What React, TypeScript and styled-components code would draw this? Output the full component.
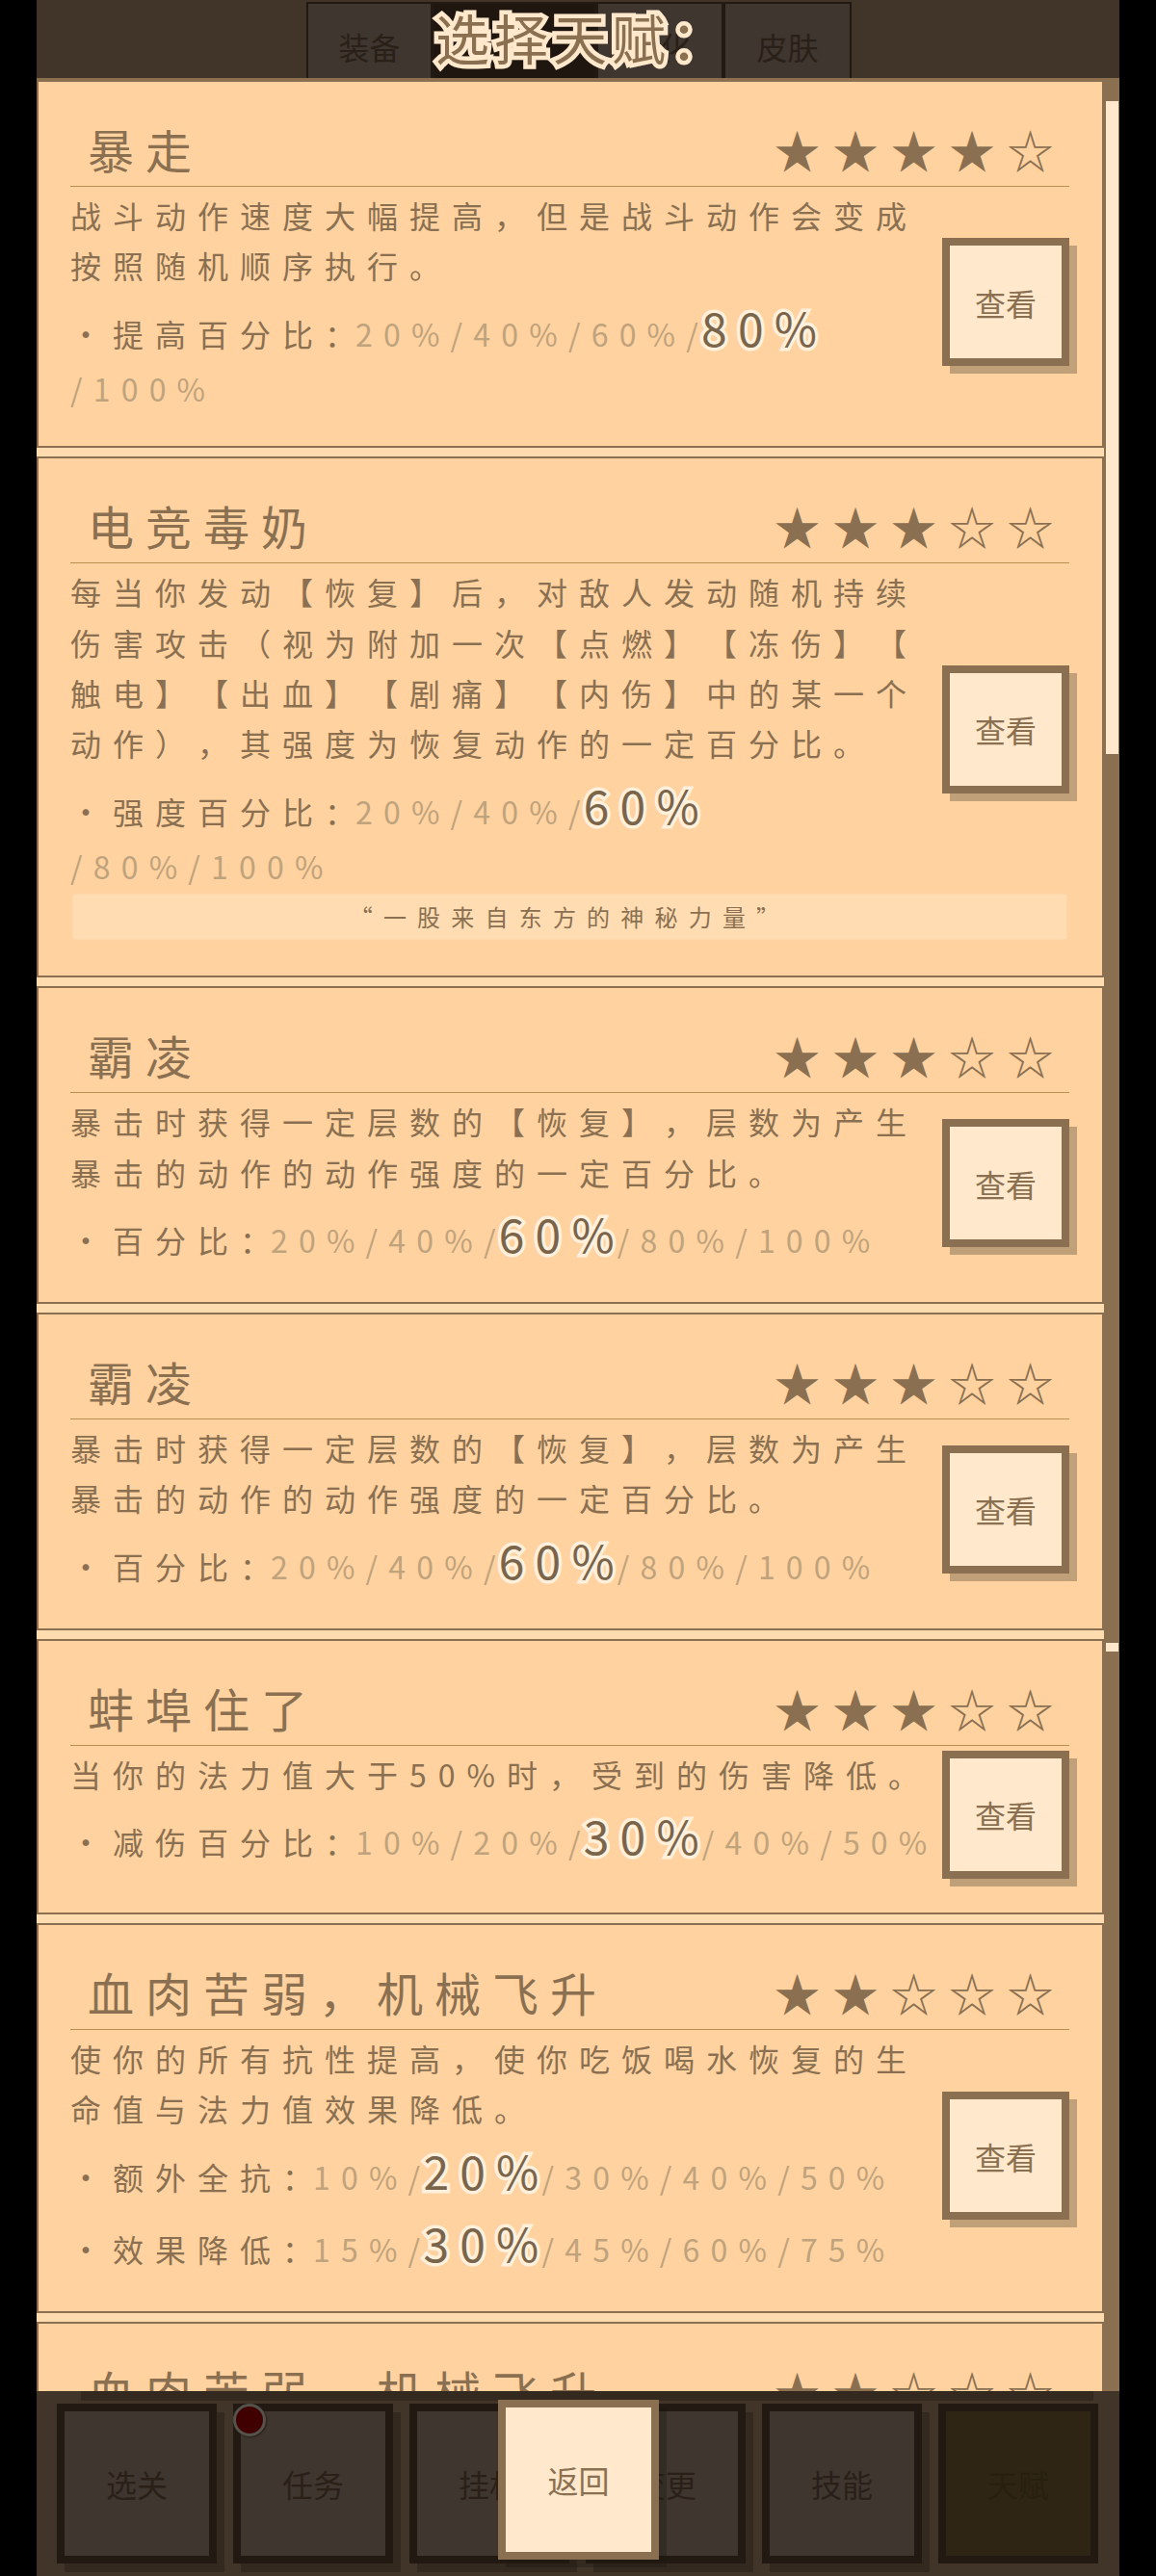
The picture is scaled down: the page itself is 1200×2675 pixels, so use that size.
import React from "react";
import styled, { createGlobalStyle } from "styled-components";

const Global = createGlobalStyle`
  html, body { margin: 0; padding: 0; background: #000; }
  body { font-family: "Noto Sans CJK SC", "Noto Sans", sans-serif; }
`;

const App = styled.div`
  width: 1124px;
  height: 2675px;
  margin-left: 38px;
  display: flex;
  flex-direction: column;
  position: relative;
  overflow: hidden;
  background: #403528;
`;

const Header = styled.header`
  flex: none;
  height: 81px;
  border-bottom: 2px solid #8a7050;
  background: #403528;
  display: flex;
  align-items: flex-end;
  padding-left: 280px;
  position: relative;
`;

const Tab = styled.div<{ $w: number; $active?: boolean }>`
  width: ${(p) => p.$w}px;
  height: 79px;
  box-sizing: border-box;
  border: 2px solid #221a12;
  border-bottom: 0;
  background: ${(p) => (p.$active ? "#1f170f" : "#3f3630")};
  color: #2a2018;
  font-size: 32px;
  line-height: 32px;
  padding-top: 28px;
  text-align: center;
`;

const Title = styled.h1`
  position: absolute;
  left: 414px;
  top: 2px;
  margin: 0;
  font-size: 56px;
  line-height: 72px;
  letter-spacing: 5px;
  font-weight: 400;
  white-space: nowrap;
  color: #8a7050;
  -webkit-text-stroke: 9px #ffe8cc;
  paint-order: stroke fill;
`;

const Main = styled.div`
  flex: 1;
  min-height: 0;
  display: flex;
  overflow: hidden;
`;

const List = styled.div`
  flex: 1;
  min-width: 0;
  display: flex;
  flex-direction: column;
  gap: 9px;
  background: #ffdcb0;
`;

const Card = styled.section`
  flex: none;
  border: 2px solid #8a7050;
  background: #ffd2a0;
  padding: 0 34px 28px 33px;
  position: relative;
`;

const CardHead = styled.div`
  height: 109px;
  padding: 33px 4px 0 18px;
  box-sizing: border-box;
  display: flex;
  justify-content: space-between;
  align-items: flex-start;
  border-bottom: 1.5px solid #b8904f;
`;

const CardName = styled.h2`
  margin: 0;
  font-size: 48px;
  line-height: 72px;
  letter-spacing: 12px;
  font-weight: 400;
  color: #8a7050;
`;

const Stars = styled.div`
  font-size: 48px;
  line-height: 72px;
  letter-spacing: 12.5px;
  color: #8a7050;
`;

const CardBody = styled.div`
  display: flex;
  align-items: center;
`;

const TextCol = styled.div`
  width: 905px;
  flex: none;
  align-self: flex-start;
  padding: 3px 0 6px;
`;

const Desc = styled.p`
  margin: 0;
  font-size: 32px;
  line-height: 52.4px;
  letter-spacing: 12px;
  line-break: anywhere;
  text-spacing-trim: space-all;
  color: #8a7050;
`;

const Stat = styled.p`
  margin: 13px 0 0;
  font-size: 32px;
  line-height: 52.4px;
  letter-spacing: 12px;
  color: #8a7050;
`;

const Colon = styled.span`
  letter-spacing: 0;
`;

const Dim = styled.span`
  color: #bfa37c;
  letter-spacing: 11.2px;
`;

const Big = styled.span`
  display: inline-block;
  font-size: 48px;
  line-height: 48px;
  letter-spacing: 11.2px;
  padding-bottom: 14px;
  margin: 0 -8px;
  color: #7a644a;
  -webkit-text-stroke: 7px #fff0dc;
  paint-order: stroke fill;
`;

const ViewButton = styled.button`
  flex: none;
  width: 132px;
  height: 133px;
  margin: 5px 0 7px;
  box-sizing: border-box;
  border: 8px solid #8a7050;
  background: #ffe8cc;
  box-shadow: 8px 8px 0 #bfa078;
  color: #8a7050;
  font-family: inherit;
  font-size: 32px;
  padding: 0;
`;

const Quote = styled.div`
  margin: -2px 3px 10px 3px;
  height: 46px;
  line-height: 45px;
  font-size: 24px;
  letter-spacing: 11.2px;
  text-align: center;
  color: #8a7050;
  background: #ffdcb2;
  box-shadow: 0 0 3px #ffdcb2;
`;

const Track = styled.div`
  flex: none;
  width: 16px;
  background: #8a7050;
  position: relative;
`;

const Thumb = styled.div<{ $top: number; $h: number }>`
  position: absolute;
  left: 2px;
  width: 13px;
  top: ${(p) => p.$top}px;
  height: ${(p) => p.$h}px;
  background: #ffe8cc;
`;

const Bar = styled.nav`
  flex: none;
  height: 192px;
  box-sizing: border-box;
  padding: 13px 0 0 21px;
  display: flex;
  gap: 17px;
  background: #403528;
  position: relative;
  &::before {
    content: "";
    position: absolute;
    left: 46px;
    width: 1051px;
    top: 0;
    height: 10px;
    background: #33291e;
  }
`;

const NavButton = styled.div<{ $current?: boolean }>`
  flex: none;
  width: 166px;
  height: 166px;
  box-sizing: border-box;
  border: 8px solid #221a12;
  background: ${(p) => (p.$current ? "#2f2515" : "#3f3630")};
  box-shadow: ${(p) => (p.$current ? "none" : "8px 9px 0 #33291e")};
  color: ${(p) => (p.$current ? "#28200f" : "#2a2018")};
  font-size: 32px;
  display: flex;
  align-items: center;
  justify-content: center;
  position: relative;
`;

const Dot = styled.span`
  position: absolute;
  left: -8px;
  top: -8px;
  width: 34px;
  height: 34px;
  box-sizing: border-box;
  border-radius: 50%;
  background: #400000;
  border: 3px solid #55524c;
  box-shadow: 1px 1px 2px #2a2018;
`;

const BackButton = styled.div`
  position: absolute;
  left: 479px;
  top: 2492px;
  width: 167px;
  height: 166px;
  box-sizing: border-box;
  border: 8px solid #8a7050;
  background: #ffe8cc;
  box-shadow: 8px 8px 0 rgba(30, 25, 18, 0.35);
  color: #8a7050;
  font-size: 32px;
  display: flex;
  align-items: center;
  justify-content: center;
`;

type StatData = { label: string; before: string; big: string; after: string };
type TalentData = {
  name: string;
  stars: number;
  desc: string;
  stats: StatData[];
  quote?: string;
};

const baling: TalentData = {
  name: "霸凌",
  stars: 3,
  desc: "暴击时获得一定层数的【恢复】，层数为产生暴击的动作的动作强度的一定百分比。",
  stats: [{ label: "·百分比", before: "20%/40%/", big: "60%", after: "/80%/100%" }],
};

const feisheng: TalentData = {
  name: "血肉苦弱，机械飞升",
  stars: 2,
  desc: "使你的所有抗性提高，使你吃饭喝水恢复的生命值与法力值效果降低。",
  stats: [
    { label: "·额外全抗", before: "10%/", big: "20%", after: "/30%/40%/50%" },
    { label: "·效果降低", before: "15%/", big: "30%", after: "/45%/60%/75%" },
  ],
};

const talents: TalentData[] = [
  {
    name: "暴走",
    stars: 4,
    desc: "战斗动作速度大幅提高，但是战斗动作会变成按照随机顺序执行。",
    stats: [{ label: "·提高百分比", before: "20%/40%/60%/", big: "80%", after: "/100%" }],
  },
  {
    name: "电竞毒奶",
    stars: 3,
    desc: "每当你发动【恢复】后，对敌人发动随机持续伤害攻击（视为附加一次【点燃】【冻伤】【触电】【出血】【剧痛】【内伤】中的某一个动作），其强度为恢复动作的一定百分比。",
    stats: [{ label: "·强度百分比", before: "20%/40%/", big: "60%", after: "/80%/100%" }],
    quote: "“一股来自东方的神秘力量”",
  },
  baling,
  baling,
  {
    name: "蚌埠住了",
    stars: 3,
    desc: "当你的法力值大于50%时，受到的伤害降低。",
    stats: [{ label: "·减伤百分比", before: "10%/20%/", big: "30%", after: "/40%/50%" }],
  },
  feisheng,
  feisheng,
];

const navItems = ["选关", "任务", "挂机", "变更", "技能", "天赋"];

export default function Page() {
  return (
    <App>
      <Global />
      <Header>
        <Tab $w={131}>装备</Tab>
        <Tab $w={170} $active />
        <Tab $w={132}>强化</Tab>
        <Tab $w={133}>皮肤</Tab>
        <Title>选择天赋：</Title>
      </Header>
      <Main>
        <List>
          {talents.map((t, i) => (
            <Card key={i}>
              <CardHead>
                <CardName>{t.name}</CardName>
                <Stars>{"★".repeat(t.stars) + "☆".repeat(5 - t.stars)}</Stars>
              </CardHead>
              <CardBody>
                <TextCol>
                  <Desc>{t.desc}</Desc>
                  {t.stats.map((s) => (
                    <Stat key={s.label}>
                      {s.label}
                      <Colon>：</Colon>
                      <Dim>{s.before}</Dim>
                      <Big>{s.big}</Big>
                      <Dim>{s.after}</Dim>
                    </Stat>
                  ))}
                </TextCol>
                <ViewButton>查看</ViewButton>
              </CardBody>
              {t.quote && <Quote>{t.quote}</Quote>}
            </Card>
          ))}
        </List>
        <Track>
          <Thumb $top={22} $h={678} />
          <Thumb $top={1623} $h={9} />
        </Track>
      </Main>
      <Bar>
        {navItems.map((n, i) => (
          <NavButton key={n} $current={i === 5}>
            {n}
            {i === 1 && <Dot />}
          </NavButton>
        ))}
      </Bar>
      <BackButton>返回</BackButton>
    </App>
  );
}
